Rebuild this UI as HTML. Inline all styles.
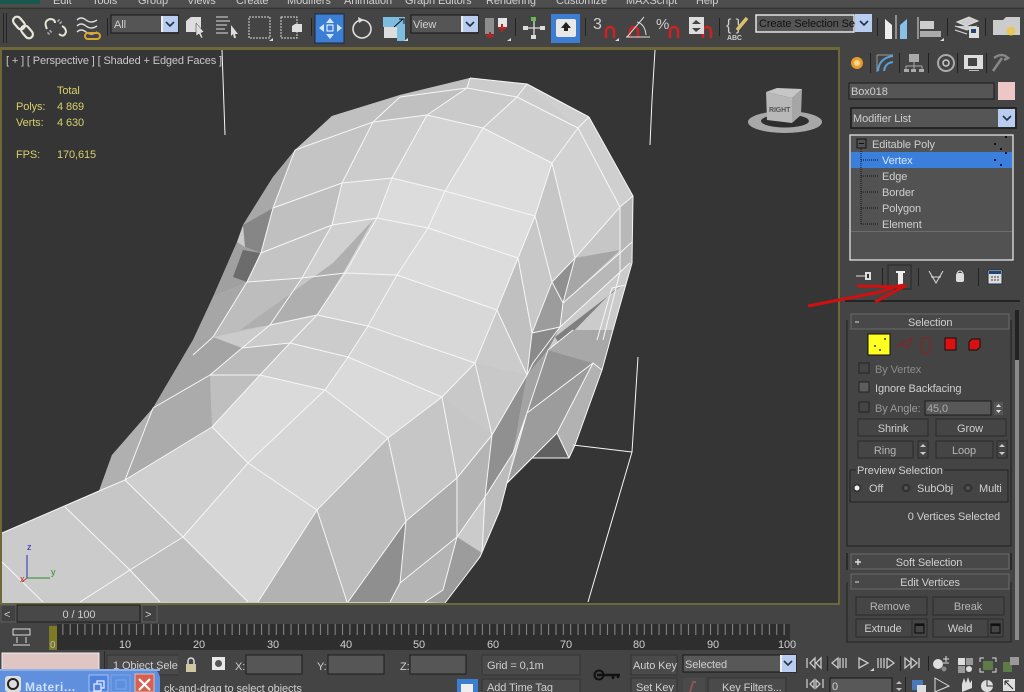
<!DOCTYPE html>
<html><head><meta charset="utf-8"><style>
html,body{margin:0;padding:0;background:#444;width:1024px;height:692px;overflow:hidden}
svg{display:block;filter:blur(.35px)}
text{font-family:"Liberation Sans",sans-serif;font-size:11px;fill:#cfcfcf;letter-spacing:-.1px}
.b{fill:#454545;stroke:#2a2a2a;stroke-width:1}
.bd{fill:#414141;stroke:#606060;stroke-width:1}
.y{fill:#d7cf6c}
</style></head><body>
<svg width="1024" height="692" viewBox="0 0 1024 692" xmlns="http://www.w3.org/2000/svg">
<defs><pattern id="t" x="52" y="624" width="7.36" height="30" patternUnits="userSpaceOnUse"><rect x="3" y="0" width="1" height="11" fill="#8a8a8a"/></pattern></defs>
<rect width="1024" height="692" fill="#444"/>
<!-- menu -->
<rect width="1024" height="7" fill="#4d4d4d"/><rect width="40" height="4" fill="#17584f"/>
<g><text x="53" y="4">Edit</text><text x="92" y="4">Tools</text><text x="138" y="4">Group</text><text x="187" y="4">Views</text><text x="236" y="4">Create</text><text x="287" y="4">Modifiers</text><text x="344" y="4">Animation</text><text x="405" y="4">Graph Editors</text><text x="486" y="4">Rendering</text><text x="556" y="4">Customize</text><text x="626" y="4">MAXScript</text><text x="696" y="4">Help</text></g>
<rect y="8" width="1024" height="1" fill="#333"/>
<!-- toolbar -->
<rect x="3" y="13" width="1" height="30" fill="#222"/><rect x="6" y="13" width="1" height="30" fill="#222"/>
<g fill="none" stroke="#e6e6d8" stroke-width="2.2"><rect x="12" y="19" width="14" height="8" rx="4" transform="rotate(50 19 23)"/><rect x="20" y="28" width="14" height="8" rx="4" transform="rotate(50 27 32)"/></g>
<path d="M47 29q-4-8 3-10q5 0 5 4M59 34q5 4 7-2q0-4-4-6" fill="none" stroke="#e4e4d6" stroke-width="2"/><path d="M58 20l4 4M48 34l4-4" stroke="#aaa" stroke-width="3" stroke-dasharray="1.5 1.5"/>
<path d="M77 20q4-4 9 0t11 0M77 26q4-4 9 0t11 0M77 32q4-4 9 0t11 0" fill="none" stroke="#ddd" stroke-width="1.4"/><rect x="85" y="33" width="15" height="6" rx="3" fill="none" stroke="#d9a731" stroke-width="2"/>
<rect x="107" y="18" width="1" height="18" fill="#222"/>
<rect x="111" y="15" width="67" height="18" fill="#555" stroke="#161616"/><text x="114" y="28">All</text><rect x="161" y="16" width="17" height="16" fill="#b9cdf0"/><rect x="161" y="16" width="2" height="16" fill="#eee"/><path d="M166 22l4 4 4-4" fill="none" stroke="#234" stroke-width="1.6"/>
<path d="M186 21l5-4h10v15h-15z" fill="#ddd"/><path d="M196 23l8 9-3 1 2 5-2 0-2-4-3 2z" fill="#ddd" stroke="#333" stroke-width=".5"/>
<path d="M216 17h12M216 21h14M216 25h11M216 29h9M216 33h12" stroke="#ddd" stroke-width="1"/><path d="M231 25l7 9-3 0 1 4-2 0-1-4-2 2z" fill="#ddd"/>
<rect x="249" y="17" width="21" height="21" fill="none" stroke="#ddd" stroke-dasharray="2 1"/><path d="M269 41l4-3v3z" fill="#ddd"/>
<rect x="281" y="17" width="16" height="21" fill="none" stroke="#ddd" stroke-dasharray="2 1"/><path d="M292 26l3-2h7v8h-10z" fill="#ddd"/>
<rect x="311" y="18" width="1" height="18" fill="#222"/>
<rect x="315" y="14" width="29" height="29" fill="#3b7ed3" stroke="#1e2a3c"/>
<path d="M330 18l-4 5h8zM330 39l-4-5h8zM319 28l5-4v8zM342 28l-5-4v8z" fill="#cfe8ff"/><rect x="327" y="25" width="6" height="6" fill="none" stroke="#fff"/>
<circle cx="362" cy="29" r="9" fill="none" stroke="#ddd" stroke-width="1.6"/><path d="M358 17l6 3-5 3z" fill="#ddd"/>
<path d="M383 17h22v24h-8v-14h-14z" fill="#7dbde0"/><rect x="384" y="27" width="13" height="11" fill="#ddd"/><path d="M394 27l9-8M399 19h5v5" stroke="#111" fill="none"/><path d="M404 41l4-3v3z" fill="#ddd"/>
<rect x="411" y="15" width="67" height="18" fill="#555" stroke="#161616"/><text x="413" y="28">View</text><rect x="461" y="16" width="17" height="16" fill="#b9cdf0"/><rect x="461" y="16" width="2" height="16" fill="#eee"/><path d="M466 22l4 4 4-4" fill="none" stroke="#234" stroke-width="1.6"/>
<rect x="485" y="18" width="9" height="16" fill="#8d8d8d"/><path d="M486 36h8M490 32v6" stroke="#b22" stroke-width="2"/><rect x="498" y="18" width="9" height="10" fill="#e6e6e6"/><path d="M498 28h9M502 24v8" stroke="#b22" stroke-width="2"/><path d="M507 41l4-3v3z" fill="#ddd"/>
<rect x="515" y="18" width="1" height="18" fill="#222"/>
<path d="M534 19v18M523 28h20" stroke="#ddd" stroke-width="1.3"/><rect x="531" y="17" width="5" height="4" fill="#6b5"/><rect x="523" y="26" width="5" height="4" fill="#ddd"/><rect x="540" y="26" width="5" height="4" fill="#ddd"/><rect x="531" y="35" width="5" height="4" fill="#ddd"/>
<rect x="551" y="14" width="29" height="29" fill="#3b7ed3"/><rect x="556" y="19" width="20" height="18" rx="2" fill="#e8e8e8"/><path d="M566 22l-5 6h3v3h4v-3h3z" fill="#222"/>
<rect x="585" y="18" width="1" height="18" fill="#222"/>
<text x="593" y="29" style="font-size:16px">3</text>
<g fill="none" stroke="#c22" stroke-width="2.6"><path d="M606 38v-7a4 4 0 0 1 8 0v7"/><path d="M630 38v-7a4 4 0 0 1 8 0v7"/><path d="M670 38v-7a4 4 0 0 1 8 0v7"/><path d="M703 38v-7a4 4 0 0 1 8 0v7"/></g>
<path d="M615 41l4-3v3z" fill="#ddd"/>
<path d="M627 37l17-20M626 37h24M637 22q8 2 9 13" fill="none" stroke="#ddd"/>
<text x="656" y="29" style="font-size:15px">%</text>
<rect x="689" y="17" width="15" height="17" fill="#ddd"/><path d="M692 24l4-4 5 4zM692 28h9l-5 4z" fill="#444"/>
<rect x="719" y="18" width="1" height="18" fill="#222"/>
<text x="726" y="30" style="font-size:16px">{ }</text><text x="727" y="40" style="font-size:7px;font-weight:bold">ABC</text><path d="M737 30l10-12" stroke="#d8c26a" stroke-width="3.5"/>
<rect x="756" y="15" width="98" height="17" fill="#555" stroke="#eee" stroke-width="1.4"/><text x="759" y="27" style="fill:#111">Create Selection Se</text><rect x="855" y="14" width="17" height="18" fill="#b9cdf0"/><path d="M860 21l4 4 4-4" fill="none" stroke="#234" stroke-width="1.6"/>
<rect x="877" y="18" width="1" height="18" fill="#222"/>
<path d="M885 19l7 6v14h-7z" fill="#eee"/><path d="M907 19l-7 6v14h7z" fill="#88c0e8"/><path d="M896 15v24" stroke="#ddd"/>
<path d="M918 17v22" stroke="#ddd"/><rect x="920" y="21" width="14" height="8" fill="#ccc"/><rect x="920" y="31" width="21" height="6" fill="#aaa"/><path d="M940 41l4-3v3z" fill="#ddd"/>
<rect x="947" y="18" width="1" height="18" fill="#222"/>
<path d="M957 22l12-5 9 4-12 5zM955 26l12 4 10-4M955 30l12 4" fill="#ccc" stroke="#ddd"/><rect x="969" y="27" width="10" height="11" fill="#ddd"/><rect x="971" y="29" width="5" height="4" fill="#247"/>
<rect x="985" y="18" width="1" height="18" fill="#222"/>
<path d="M993 20h10l3-3h14v18h-27z" fill="#ccc"/><circle cx="1011" cy="31" r="4.5" fill="#e7c65a"/>
<!-- viewport -->
<rect x="0" y="47" width="840" height="558" fill="#6e6838"/>
<rect x="2" y="50" width="836" height="553" fill="#353535"/>
<!-- mesh -->
<path d="M2 533L99 491L112 455L153 408L193 340L213 297L237 242L243 225L273 177L295 150L332 116L400 95L470 78L527 84L589 117L633 196L632 263L613 330L602 370L575 445L569 458L532 458L507 483L500 510L480 557L445 603L2 603Z" fill="#cbcbcb"/>
<g>
<polygon points="295,150 332,116 400,95 470,78 467,88 427,115 373,122" fill="#c0c0c0"/>
<polygon points="295,150 373,122 342,183 273,208" fill="#c4c4c4"/>
<polygon points="273,208 342,183 332,225 261,253" fill="#c0c0c0"/>
<polygon points="261,253 332,225 302,278 247,282" fill="#c4c4c4"/>
<polygon points="247,282 302,278 270,325 213,337" fill="#bdbdbd"/>
<polygon points="295,150 273,208 243,225 273,177" fill="#a8a8a8"/>
<polygon points="243,225 273,208 261,253 245,247" fill="#868686"/>
<polygon points="237,242 245,247 261,253 247,282 213,297" fill="#a0a0a0"/>
<polygon points="243,250 260,253 247,282 233,277" fill="#6c6c6c"/>
<polygon points="213,297 247,282 213,337 193,340" fill="#a6a6a6"/>
<polygon points="373,122 427,115 392,178 342,183" fill="#cccccc"/>
<polygon points="342,183 392,178 377,218 332,225" fill="#d2d2d2"/>
<polygon points="332,225 377,218 345,273 302,278" fill="#d0d0d0"/>
<polygon points="302,278 345,273 317,315 270,325" fill="#c6c6c6"/>
<polygon points="373,220 333,263 240,330 270,325 317,315 343,273" fill="#afafaf"/>
<polygon points="427,115 483,128 445,191 392,178" fill="#d4d4d4"/>
<polygon points="392,178 445,191 428,228 377,218" fill="#dcdcdc"/>
<polygon points="377,218 428,228 397,275 345,273" fill="#d8d8d8"/>
<polygon points="345,273 397,275 368,326 317,315" fill="#d4d4d4"/>
<polygon points="467,88 517,97 483,128 427,115" fill="#cacaca"/>
<polygon points="517,97 578,128 552,163 483,128" fill="#d0d0d0"/>
<polygon points="483,128 552,163 535,216 445,191" fill="#dddddd"/>
<polygon points="445,191 535,216 518,258 428,228" fill="#dedede"/>
<polygon points="428,228 518,258 497,310 397,275" fill="#dcdcdc"/>
<polygon points="397,275 497,310 475,363 368,326" fill="#d8d8d8"/>
<polygon points="368,326 475,363 442,397 348,357" fill="#d6d6d6"/>
<polygon points="317,315 368,326 348,357 290,343" fill="#cccccc"/>
<polygon points="290,343 348,357 325,390 260,375" fill="#d0d0d0"/>
<polygon points="348,357 442,397 388,438 325,390" fill="#dadada"/>
<polygon points="260,375 325,390 248,463 212,427" fill="#dadada"/>
<polygon points="325,390 388,438 317,510 248,463" fill="#d6d6d6"/>
<polygon points="248,463 317,510 258,602 248,602 183,537" fill="#d6d6d6"/>
<polygon points="125,480 212,427 248,463 183,537" fill="#cfcfcf"/>
<polygon points="65,507 125,480 183,537 130,570" fill="#c6c6c6"/>
<polygon points="130,570 183,537 248,602 160,602" fill="#c0c0c0"/>
<polygon points="210,375 260,375 212,427" fill="#bfbfbf"/>
<polygon points="153,408 210,375 212,427 125,480" fill="#ababab"/>
<polygon points="153,408 125,480 99,491 112,455" fill="#b0b0b0"/>
<polygon points="193,340 213,337 242,348 210,375 153,408" fill="#a4a4a4"/>
<polygon points="242,348 290,343 260,375 210,375" fill="#bbbbbb"/>
<polygon points="470,78 527,84 578,128 517,97 467,88" fill="#cccccc"/>
<polygon points="527,84 589,117 633,196 620,207 578,128" fill="#cfcfcf"/>
<polygon points="578,128 620,207 575,258 552,163" fill="#d2d2d2"/>
<polygon points="552,163 575,258 552,282 535,216" fill="#c6c6c6"/>
<polygon points="535,216 552,282 532,333 518,258" fill="#c8c8c8"/>
<polygon points="518,258 532,333 527,375 497,310" fill="#c0c0c0"/>
<polygon points="620,207 633,196 632,263 620,272" fill="#b8b8b8"/>
<polygon points="575,258 620,207 620,250 566,298" fill="#c6c6c6"/>
<polygon points="575,258 620,250 563,303" fill="#a6a6a6"/>
<polygon points="552,282 575,258 563,303" fill="#909090"/>
<polygon points="552,282 563,303 560,327 532,333" fill="#9c9c9c"/>
<polygon points="563,303 620,253 620,272 560,327" fill="#b8b8b8"/>
<polygon points="625,283 612,292 560,345 555,337" fill="#7f7f7f"/>
<polygon points="532,333 560,327 548,350 527,375" fill="#8a8a8a"/>
<polygon points="475,363 527,375 492,435 442,397" fill="#c8c8c8"/>
<polygon points="442,397 492,435 457,478 406,521 388,438" fill="#c6c6c6"/>
<polygon points="388,438 406,521 348,602 317,510" fill="#bdbdbd"/>
<polygon points="317,510 348,602 258,602" fill="#b2b2b2"/>
<polygon points="406,521 457,478 457,537 400,583" fill="#adadad"/>
<polygon points="348,602 406,521 400,583 390,602" fill="#8f8f8f"/>
<polygon points="457,478 492,435 485,497 457,537" fill="#b4b4b4"/>
<polygon points="492,435 527,375 513,453 485,497" fill="#909090"/>
<polygon points="400,583 457,537 443,590 425,602 390,602" fill="#b4b4b4"/>
<polygon points="457,537 482,553 445,603 425,602 443,590" fill="#9c9c9c"/>
<polygon points="485,497 513,453 507,483 500,510 480,557 482,553" fill="#bcbcbc"/>
<polygon points="527,375 548,350 527,413 513,453" fill="#a4a4a4"/>
<polygon points="548,350 593,363 527,413" fill="#949494"/>
<polygon points="527,413 593,363 557,433 507,483" fill="#9c9c9c"/>
<polygon points="593,363 602,370 575,445 569,458 557,433" fill="#b2b2b2"/>
<polygon points="557,433 569,458 532,458" fill="#606060"/>
<polygon points="548,350 573,330 613,330 602,370 593,363" fill="#a8a8a8"/>
</g>
<g fill="none" stroke="#f6f6f6" stroke-width="1" stroke-linejoin="round">
<path d="M2 533L99 491L125 480L212 427L260 375L290 343L317 315L345 273L377 218L392 178L427 115L467 88"/>
<path d="M400 97L373 122L342 183L332 225L302 278L270 325L242 348L210 375L153 408L125 480"/>
<path d="M295 150L273 208L261 253L247 282L213 337L193 355"/>
<path d="M517 97L483 128L445 191L428 228L397 275L368 326L348 357L325 390L248 463L183 537L130 570L80 602"/>
<path d="M578 128L552 163L535 216L518 258L497 310L475 363L442 397L388 438L317 510L258 602"/>
<path d="M633 196L620 207L575 258L552 282L532 333L527 375L492 435L457 478L406 521L348 602"/>
<path d="M589 117L633 196L632 263L613 330L602 370L575 445L569 458L532 458L507 483L500 510L480 557L445 603"/>
<path d="M400 97L467 88L517 97L578 128L620 207L620 272L603 340"/>
<path d="M470 78L527 84L589 117M527 84L517 97M589 117L578 128M470 78L467 88"/>
<path d="M295 150L373 122L427 115L483 128L552 163L575 258L563 303L560 327L533 363L527 375"/>
<path d="M273 208L342 183L392 178L445 191L535 216L552 282L563 303"/>
<path d="M261 253L332 225L377 218L428 228L518 258L532 333L560 327L630 263"/>
<path d="M563 303L620 253L632 242M625 285L612 288L597 340"/>
<path d="M247 282L302 278L345 273L397 275L497 310L527 375"/>
<path d="M270 325L317 315L368 326L475 363L492 435L485 497L482 553"/>
<path d="M242 348L290 343L348 357L442 397L457 478L457 537L443 590L425 602"/>
<path d="M210 375L260 375L325 390L388 438L406 521L400 583L390 602"/>
<path d="M125 480L183 537L248 602M212 427L248 463L317 510L347 602M65 507L130 570L160 602M2 562L43 602"/>
<path d="M400 583L457 537L485 497L513 453L527 413L548 350L573 330M527 413L593 363L602 370M593 363L557 433L569 458M557 433L507 483M527 413L507 483M532 458L557 433"/>
<path d="M573 445L632 452L638 357M632 452L588 602"/>
<path d="M222 50L225 135M655 50L652 100L650 145"/>
</g>
<rect x="0" y="603" width="840" height="2" fill="#6e6838"/>
<!-- axis tripod -->
<path d="M27 578V555" stroke="#2b2bb8"/><path d="M27 578H50" stroke="#2e8a2e"/><path d="M27 578l-5 4" stroke="#b44"/>
<text x="27" y="550" style="font-size:9px;fill:#2b2bb8">z</text><text x="51" y="575" style="font-size:9px;fill:#2e8a2e">y</text><text x="20" y="582" style="font-size:9px;fill:#b33">x</text>
<!-- viewport text -->
<text x="6" y="64" style="fill:#c8c8c8;font-size:11px;letter-spacing:-.13px">[ + ] [ Perspective ] [ Shaded + Edged Faces ]</text>
<text x="57" y="94" class="y">Total</text><text x="16" y="110" class="y">Polys:</text><text x="57" y="110" class="y">4 869</text><text x="16" y="126" class="y">Verts:</text><text x="57" y="126" class="y">4 630</text><text x="16" y="158" class="y">FPS:</text><text x="57" y="158" class="y">170,615</text>
<!-- view cube -->
<ellipse cx="785" cy="122" rx="37" ry="11" fill="#a8a8a8"/><ellipse cx="785" cy="121" rx="24" ry="6.500" fill="#2e2e2e"/>
<path d="M766 92l11-4 25 1-10 9z" fill="#c6c6c6"/><path d="M766 92l26 6v25l-25-3z" fill="#b8b8b8"/><path d="M792 98l10-9-1 26-9 8z" fill="#a6a6a6"/>
<text x="769" y="112" style="font-size:7px;fill:#555;font-weight:bold">RIGHT</text>
<!-- right panel -->
<rect x="840" y="47" width="184" height="600" fill="#444"/>
<circle cx="857" cy="63" r="6" fill="#e89c30"/><circle cx="857" cy="63" r="3" fill="#f8d78a"/>
<rect x="870" y="53" width="1" height="20" fill="#222"/>
<path d="M877 55h16M877 55v17" stroke="#999"/><path d="M878 71q1-13 15-15M884 71q1-8 9-9" fill="none" stroke="#5aa0d8" stroke-width="2"/>
<rect x="899" y="53" width="1" height="20" fill="#222"/>
<rect x="909" y="54" width="10" height="8" fill="#aaa"/><path d="M914 62v4M906 66h16M906 66v3M914 66v3M922 66v3" stroke="#aaa"/><rect x="904" y="69" width="5" height="3" fill="#aaa"/><rect x="911" y="69" width="5" height="3" fill="#aaa"/><rect x="919" y="69" width="5" height="3" fill="#aaa"/>
<rect x="928" y="53" width="1" height="20" fill="#222"/>
<circle cx="946" cy="63" r="8" fill="none" stroke="#aaa" stroke-width="2"/><circle cx="946" cy="63" r="3" fill="none" stroke="#ccc" stroke-width="1.5"/>
<rect x="957" y="53" width="1" height="20" fill="#222"/>
<rect x="964" y="55" width="19" height="14" fill="#ddd"/><rect x="968" y="58" width="9" height="8" fill="#444"/><rect x="969" y="70" width="10" height="1" fill="#bbb"/>
<rect x="986" y="53" width="1" height="20" fill="#222"/>
<path d="M993 71l9-13M994 58q8-6 14 0l-4 2" fill="none" stroke="#888" stroke-width="2.5"/>
<rect x="849" y="83" width="145" height="16" fill="#555" stroke="#1a1a1a"/><text x="851" y="95">Box018</text>
<rect x="998" y="82" width="17" height="18" fill="#edc6c6"/>
<rect x="851" y="108" width="165" height="20" fill="#555" stroke="#1a1a1a" stroke-width="1.5"/><text x="853" y="122">Modifier List</text>
<rect x="998" y="109" width="17" height="18" fill="#b9cdf0"/><path d="M1003 116l4 4 4-4" fill="none" stroke="#234" stroke-width="1.6"/>
<rect x="850" y="135" width="163" height="125" fill="#525252" stroke="#eee" stroke-width="1.2"/>
<rect x="851" y="152" width="161" height="16" fill="#3b7fdc"/>
<rect x="857" y="139" width="9" height="9" fill="none" stroke="#111"/><path d="M859 143.500h5" stroke="#111"/>
<path d="M861 149V224M861 160h18M861 176h18M861 192h18M861 208h18M861 224h18" fill="none" stroke="#111" stroke-dasharray="1 1"/>
<text x="872" y="148">Editable Poly</text><text x="882" y="164" style="fill:#d5e6ff">Vertex</text><text x="882" y="180">Edge</text><text x="882" y="196">Border</text><text x="882" y="212">Polygon</text><text x="882" y="228">Element</text>
<g fill="#111"><rect x="1005" y="136" width="2" height="2"/><rect x="994" y="143" width="2" height="2"/><rect x="1000" y="148" width="2" height="2"/><rect x="1005" y="152" width="2" height="2" fill="#113"/><rect x="994" y="159" width="2" height="2" fill="#113"/><rect x="1000" y="164" width="2" height="2" fill="#113"/></g>
<rect x="851" y="231" width="161" height="1" fill="#6c6c6c"/>
<!-- stack toolbar -->
<path d="M856 276h9" stroke="#ddd"/><rect x="865" y="272" width="6" height="8" fill="#ddd"/><rect x="867" y="274" width="2" height="4" fill="#333"/>
<rect x="882" y="268" width="1" height="18" fill="#222"/><rect x="888" y="265" width="23" height="24" fill="none" stroke="#292929"/><rect x="898" y="272" width="5" height="14" fill="#eee"/><rect x="896" y="271" width="9" height="2" fill="#eee"/>
<rect x="918" y="268" width="1" height="18" fill="#222"/>
<path d="M929 271l7 12 7-12M931 277h10" fill="none" stroke="#ddd"/><rect x="956" y="273" width="8" height="9" rx="2" fill="#ddd"/><path d="M957 273q3-4 6 0" fill="none" stroke="#ddd"/>
<rect x="978" y="268" width="1" height="18" fill="#222"/>
<rect x="988" y="270" width="14" height="14" fill="#ddd" stroke="#234"/><rect x="989" y="271" width="12" height="3" fill="#247"/><path d="M991 277h8M991 280h8" stroke="#444" stroke-dasharray="2 1"/>
<path d="M845 301H1020" stroke="#1a1a1a" stroke-width="1.5"/>
<path d="M808 306L880 292L898 286L905 285" stroke="#d01010" stroke-width="3" fill="none"/><path d="M857 286L903 287L875 302" stroke="#d01010" stroke-width="3" fill="none"/>
<!-- scrollbar -->
<rect x="1015" y="310" width="4" height="50" fill="#222"/><rect x="1015" y="360" width="4" height="280" fill="#8a8a8a"/>
<!-- selection rollout -->
<path d="M847 320V546H1011V320" fill="none" stroke="#1e1e1e"/>
<rect x="851" y="314" width="158" height="15" fill="#484848" stroke="#6a6a6a"/><path d="M855 322h4" stroke="#ddd"/><text x="908" y="326">Selection</text>
<rect x="868" y="334" width="22" height="21" fill="#ffff20" stroke="#111"/><g fill="#333"><circle cx="875" cy="346" r="1"/><circle cx="885" cy="339" r="1"/><circle cx="880" cy="350" r="1"/></g>
<path d="M897 346l9-5 6-3-4 10-4-3z" fill="none" stroke="#7a2a2a" stroke-width="1.5"/><path d="M922 338h6l3 4-2 11h-6l-2-6z" fill="none" stroke="#7a2a2a" stroke-width="1.5"/>
<rect x="945" y="338" width="11" height="12" fill="#e01010" stroke="#111"/>
<path d="M969 342l3-3h8v8l-3 3h-8z" fill="#d81010" stroke="#111"/>
<g fill="#454545" stroke="#222"><rect x="859" y="363" width="10" height="10"/><rect x="859" y="382" width="10" height="10" fill="#5c5c5c"/><rect x="859" y="402" width="10" height="10"/></g>
<text x="875" y="373" style="fill:#8c8c8c">By Vertex</text><text x="875" y="392">Ignore Backfacing</text><text x="875" y="412" style="fill:#999">By Angle:</text>
<rect x="925" y="401" width="66" height="14" fill="#585858" stroke="#1c1c1c"/><text x="927" y="412" style="fill:#aaa">45,0</text>
<rect x="994" y="402" width="9" height="13" fill="#555"/><path d="M996 407l2.500-3 2.500 3zM996 410l2.500 3 2.500-3z" fill="#ddd"/>
<rect x="858" y="419" width="70" height="17" class="b"/><text x="893" y="432" text-anchor="middle">Shrink</text>
<rect x="936" y="419" width="70" height="17" class="b"/><text x="970" y="432" text-anchor="middle">Grow</text>
<rect x="858" y="441" width="55" height="17" class="b"/><text x="885" y="454" text-anchor="middle" style="fill:#b5b5b5">Ring</text>
<rect x="918" y="441" width="10" height="17" class="b"/><path d="M920 447l3-3 3 3zM920 452l3 3 3-3z" fill="#ccc"/>
<rect x="936" y="441" width="57" height="17" class="b"/><text x="964" y="454" text-anchor="middle" style="fill:#b5b5b5">Loop</text>
<rect x="997" y="441" width="10" height="17" class="b"/><path d="M999 447l3-3 3 3zM999 452l3 3 3-3z" fill="#ccc"/>
<rect x="850" y="470" width="158" height="32" fill="none" stroke="#222"/><rect x="856" y="464" width="88" height="10" fill="#444"/><text x="857" y="474">Preview Selection</text>
<circle cx="857" cy="488" r="4.500" fill="#333"/><circle cx="857" cy="488" r="2.500" fill="#eee"/><circle cx="906" cy="488" r="4.500" fill="#333"/><circle cx="906" cy="488" r="2" fill="#555"/><circle cx="968" cy="488" r="4.500" fill="#333"/><circle cx="968" cy="488" r="2" fill="#555"/>
<text x="869" y="492">Off</text><text x="917" y="492">SubObj</text><text x="979" y="492">Multi</text>
<text x="1000" y="520" text-anchor="end">0 Vertices Selected</text>
<path d="M847 553V570M1011 553V570" stroke="#111"/>
<rect x="851" y="554" width="158" height="15" fill="#484848" stroke="#6a6a6a"/><path d="M855 562h6M858 559v6" stroke="#ddd" stroke-width="1.4"/><text x="929" y="566" text-anchor="middle">Soft Selection</text>
<rect x="851" y="574" width="158" height="15" fill="#484848" stroke="#6a6a6a"/><path d="M855 582h4" stroke="#ddd"/><text x="930" y="586" text-anchor="middle">Edit Vertices</text>
<path d="M847 582V642H1011V582" fill="none" stroke="#222"/>
<rect x="856" y="597" width="71" height="18" class="b"/><text x="890" y="610" text-anchor="middle" style="fill:#b5b5b5">Remove</text>
<rect x="933" y="597" width="71" height="18" class="b"/><text x="968" y="610" text-anchor="middle" style="fill:#b5b5b5">Break</text>
<rect x="856" y="619" width="56" height="18" class="b"/><text x="883" y="632" text-anchor="middle">Extrude</text>
<rect x="912" y="619" width="15" height="18" class="b"/><rect x="915" y="624" width="9" height="9" fill="none" stroke="#111" stroke-width="1.2"/><path d="M915 625h9" stroke="#111" stroke-width="2"/>
<rect x="933" y="619" width="55" height="18" class="b"/><text x="960" y="632" text-anchor="middle">Weld</text>
<rect x="988" y="619" width="15" height="18" class="b"/><rect x="991" y="624" width="9" height="9" fill="none" stroke="#111" stroke-width="1.2"/><path d="M991 625h9" stroke="#111" stroke-width="2"/>
<!-- time slider -->
<rect x="1" y="605" width="15" height="17" class="bd"/><text x="4" y="618">&lt;</text>
<rect x="17" y="605" width="123" height="17" fill="#484848" stroke="#1c1c1c"/><text x="79" y="618" text-anchor="middle">0 / 100</text>
<rect x="142" y="605" width="15" height="17" class="bd"/><text x="145" y="618">&gt;</text>
<rect x="57" y="624" width="733" height="26" fill="#2e2e2e"/><rect x="57" y="624" width="733" height="11" fill="url(#t)"/>
<rect x="49" y="626" width="8" height="24" fill="#7d7a25"/><text x="50" y="648" style="font-size:10px;fill:#bbb">0</text>
<rect x="13" y="629" width="17" height="6" fill="none" stroke="#ddd"/><path d="M13 645h17M17 637v6M26 637v6" stroke="#ddd"/>
<g text-anchor="middle"><text x="125" y="648">10</text><text x="199" y="648">20</text><text x="273" y="648">30</text><text x="346" y="648">40</text><text x="419" y="648">50</text><text x="493" y="648">60</text><text x="566" y="648">70</text><text x="639" y="648">80</text><text x="713" y="648">90</text><text x="787" y="648">100</text></g>
<!-- status -->
<rect x="104" y="651" width="1" height="41" fill="#2a2a2a"/>
<rect x="2" y="653" width="97" height="27" fill="#e0c6c2" stroke="#eee"/>
<rect x="107" y="655" width="72" height="20" fill="#4a4a4a" stroke="#333"/><text x="113" y="669">1 Object Selec</text><rect x="178" y="655" width="6" height="20" fill="#444"/>
<rect x="186" y="664" width="10" height="8" fill="#cfc7a0"/><path d="M188 664v-3a3 3 0 0 1 6 0v3" fill="none" stroke="#ddd" stroke-width="1.5"/>
<rect x="212" y="657" width="13" height="13" fill="#e8e8e8"/><circle cx="218.500" cy="663.500" r="3.500" fill="#555"/>
<text x="235" y="670">X:</text><rect x="246" y="655" width="56" height="19" fill="#565656" stroke="#1c1c1c"/>
<text x="317" y="670">Y:</text><rect x="328" y="655" width="56" height="19" fill="#565656" stroke="#1c1c1c"/>
<text x="400" y="670">Z:</text><rect x="410" y="655" width="56" height="19" fill="#565656" stroke="#1c1c1c"/>
<rect x="482" y="655" width="98" height="20" fill="#4a4a4a" stroke="#333"/><text x="487" y="669">Grid = 0,1m</text>
<path d="M597 675h23M613 675v4M618 675v3" stroke="#111" stroke-width="2.400"/><circle cx="599" cy="675" r="4.500" fill="none" stroke="#111" stroke-width="2"/>
<rect x="631" y="655" width="46" height="20" fill="#4a4a4a" stroke="#333"/><text x="633" y="669">Auto Key</text>
<rect x="631" y="678" width="46" height="20" fill="#4a4a4a" stroke="#333"/><text x="636" y="691">Set Key</text>
<rect x="683" y="655" width="113" height="17" fill="#585858" stroke="#161616"/><text x="685" y="668">Selected</text><rect x="780" y="655" width="16" height="17" fill="#b9cdf0"/><rect x="780" y="655" width="2" height="17" fill="#eee"/><path d="M784 661l4 4 4-4" fill="none" stroke="#234" stroke-width="1.6"/>
<rect x="683" y="678" width="22" height="20" fill="#4a4a4a"/><path d="M690 692l3-10h3" stroke="#8a5555" fill="none" stroke-width="2"/>
<rect x="708" y="678" width="78" height="20" fill="#4a4a4a" stroke="#333"/><text x="722" y="691">Key Filters...</text>
<!-- prompt -->
<text x="164" y="692">ck-and-drag to select objects</text>
<rect x="457" y="679" width="21" height="14" fill="#3b7ed3"/><rect x="461" y="684" width="12" height="8" fill="#eee"/>
<rect x="482" y="679" width="98" height="14" fill="#4a4a4a" stroke="#333"/><text x="487" y="691">Add Time Tag</text>
<!-- transport -->
<g fill="none" stroke="#c8c8c8" stroke-width="1.3">
<path d="M807 658v10M810 663l5-5v10zM816 663l5-5v10z"/>
<path d="M832 663l6-5v10zM840 658v10M843 658v10M846 658v10"/>
<path d="M859 658v10l9-5z"/>
<path d="M878 658v10M881 658v10M884 658v10M887 658v10l7-5-7-5"/>
<path d="M905 658v10l6-5zM911 658v10l6-5zM919 658v10"/>
<path d="M807 679v9M810 684l4-4v8zM816 680l4 4-4 4zM823 679v9"/>
</g>
<path d="M870 671l4-3v3z" fill="#ddd"/>
<rect x="827" y="656" width="1" height="15" fill="#222"/><rect x="900" y="656" width="1" height="15" fill="#222"/><rect x="928" y="656" width="1" height="15" fill="#222"/>
<circle cx="938" cy="664" r="5" fill="#ddd"/><circle cx="944" cy="669" r="2.500" fill="#888"/><path d="M943 659h6M946 656v6M943 663h6" stroke="#ddd"/>
<rect x="958" y="658" width="7" height="7" fill="#ddd"/><rect x="966" y="658" width="7" height="7" fill="#999"/><rect x="958" y="666" width="7" height="7" fill="#999"/><circle cx="969" cy="669" r="3" fill="#ddd"/>
<path d="M980 662v-4h4M992 658h4v4M980 668v4h4M996 668v4h-4" stroke="#ddd" fill="none"/><rect x="983" y="661" width="10" height="9" fill="#5d7a48"/>
<rect x="1003" y="662" width="9" height="10" fill="#5d7a48"/><rect x="1010" y="657" width="9" height="8" fill="#999"/>
<rect x="830" y="678" width="62" height="16" fill="#585858" stroke="#161616"/><text x="832" y="690">0</text>
<path d="M896 684l3-3 3 3zM896 688l3 3 3-3z" fill="#bbb"/>
<rect x="905" y="677" width="1" height="15" fill="#222"/>
<rect x="912" y="680" width="11" height="10" fill="#4a78b8"/><rect x="917" y="685" width="9" height="8" fill="#ddd"/>
<path d="M935 678l14 8-14 6z" fill="none" stroke="#ddd"/><path d="M962 692v-8l2-6 2 5 2-6 2 6 2-3v8z" fill="#ddd"/>
<circle cx="987" cy="686" r="6" fill="#ddd"/><path d="M987 680v6h6" stroke="#333" fill="none"/>
<rect x="1003" y="679" width="12" height="12" fill="#ddd"/><path d="M1005 681l8 8M1005 681h4M1005 681v4" stroke="#222" fill="none"/>
<!-- Taskbar thumb -->
<path d="M0 672q0-3 3-3H150q9 0 10 9V692H0z" fill="#5f8fdd"/><rect x="0" y="669" width="160" height="2" fill="#8db0ea"/>
<rect x="5" y="676" width="16" height="16" rx="3" fill="#ddd"/><circle cx="13" cy="684" r="5" fill="none" stroke="#222" stroke-width="2"/>
<text x="25" y="691" style="font-size:12px;font-weight:bold;fill:#cfe0fa;letter-spacing:.6px">Materi...</text>
<rect x="89" y="675" width="19" height="17" fill="#4d83dd" stroke="#a7c2ee"/><path d="M94 684h7v7h-7zM97 684v-3h7v7h-3" fill="none" stroke="#eef" stroke-width="1.2"/>
<rect x="111" y="675" width="19" height="17" fill="#5b8fe0" stroke="#7ea6e6"/><rect x="116" y="680" width="10" height="9" fill="none" stroke="#7ea6e6"/>
<rect x="135" y="674" width="19" height="18" fill="#d86050" stroke="#e0c0b8"/><path d="M139 679l11 11M150 679l-11 11" stroke="#fff" stroke-width="2.200"/>
</svg>
</body></html>
